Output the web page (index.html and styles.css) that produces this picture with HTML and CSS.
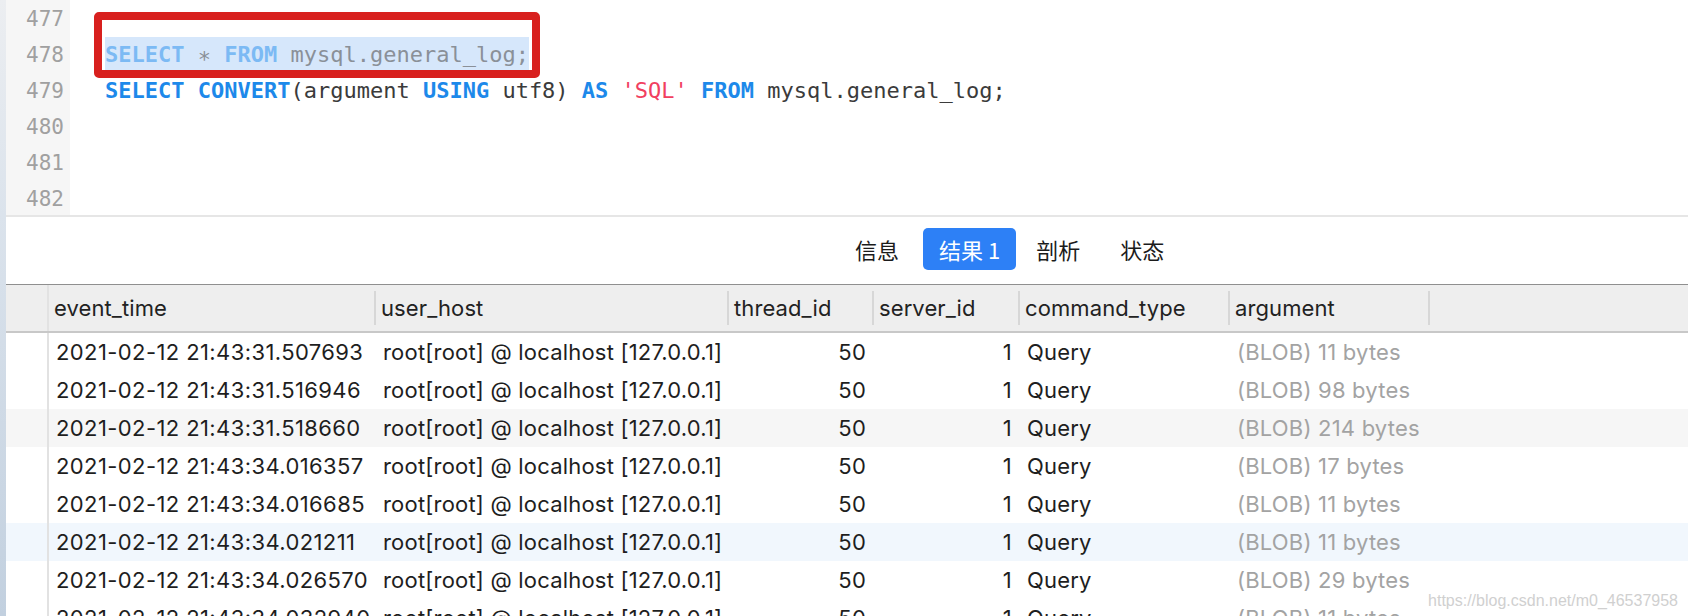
FILE: index.html
```html
<!DOCTYPE html>
<html lang="zh">
<head>
<meta charset="utf-8">
<title>general_log</title>
<link rel="stylesheet" href="styles.css">
</head>
<body>
<div class="app">
  <div class="strip"></div>
  <div class="main">
    <div class="editor">
      <div class="gutter">
        <div>477</div><div>478</div><div>479</div><div>480</div><div>481</div><div>482</div>
      </div>
      <div class="code">
        <div class="line"></div>
        <div class="line"><span class="sel"><span class="kw-s">SELECT</span> <span class="op-s">*</span> <span class="kw-s">FROM</span> mysql.general_log;</span></div>
        <div class="line"><span class="kw">SELECT</span> <span class="kw">CONVERT</span>(argument <span class="kw">USING</span> utf8) <span class="kw">AS</span> <span class="str">'SQL'</span> <span class="kw">FROM</span> mysql.general_log;</div>
        <div class="line"></div>
        <div class="line"></div>
        <div class="line"></div>
      </div>
      <div class="redbox"></div>
    </div>
    <div class="tabs">
      <div class="tab">信息</div>
      <div class="tab active">结果 1</div>
      <div class="tab">剖析</div>
      <div class="tab">状态</div>
    </div>
    <div class="grid">
      <div class="thead">
        <div class="rh"></div>
        <div class="c w1">event_time</div>
        <div class="c w2">user_host</div>
        <div class="c w3">thread_id</div>
        <div class="c w4">server_id</div>
        <div class="c w5">command_type</div>
        <div class="c w6">argument</div>
      </div>
      <div class="row">
        <div class="rh"></div>
        <div class="c w1">2021-02-12 21:43:31.507693</div>
        <div class="c w2">root[root] @ localhost [127.0.0.1]</div>
        <div class="c w3 num">50</div>
        <div class="c w4 num">1</div>
        <div class="c w5">Query</div>
        <div class="c w6 blob">(BLOB) 11 bytes</div>
      </div>
      <div class="row">
        <div class="rh"></div>
        <div class="c w1">2021-02-12 21:43:31.516946</div>
        <div class="c w2">root[root] @ localhost [127.0.0.1]</div>
        <div class="c w3 num">50</div>
        <div class="c w4 num">1</div>
        <div class="c w5">Query</div>
        <div class="c w6 blob">(BLOB) 98 bytes</div>
      </div>
      <div class="row gray">
        <div class="rh"></div>
        <div class="c w1">2021-02-12 21:43:31.518660</div>
        <div class="c w2">root[root] @ localhost [127.0.0.1]</div>
        <div class="c w3 num">50</div>
        <div class="c w4 num">1</div>
        <div class="c w5">Query</div>
        <div class="c w6 blob">(BLOB) 214 bytes</div>
      </div>
      <div class="row">
        <div class="rh"></div>
        <div class="c w1">2021-02-12 21:43:34.016357</div>
        <div class="c w2">root[root] @ localhost [127.0.0.1]</div>
        <div class="c w3 num">50</div>
        <div class="c w4 num">1</div>
        <div class="c w5">Query</div>
        <div class="c w6 blob">(BLOB) 17 bytes</div>
      </div>
      <div class="row">
        <div class="rh"></div>
        <div class="c w1">2021-02-12 21:43:34.016685</div>
        <div class="c w2">root[root] @ localhost [127.0.0.1]</div>
        <div class="c w3 num">50</div>
        <div class="c w4 num">1</div>
        <div class="c w5">Query</div>
        <div class="c w6 blob">(BLOB) 11 bytes</div>
      </div>
      <div class="row blue">
        <div class="rh"></div>
        <div class="c w1">2021-02-12 21:43:34.021211</div>
        <div class="c w2">root[root] @ localhost [127.0.0.1]</div>
        <div class="c w3 num">50</div>
        <div class="c w4 num">1</div>
        <div class="c w5">Query</div>
        <div class="c w6 blob">(BLOB) 11 bytes</div>
      </div>
      <div class="row">
        <div class="rh"></div>
        <div class="c w1">2021-02-12 21:43:34.026570</div>
        <div class="c w2">root[root] @ localhost [127.0.0.1]</div>
        <div class="c w3 num">50</div>
        <div class="c w4 num">1</div>
        <div class="c w5">Query</div>
        <div class="c w6 blob">(BLOB) 29 bytes</div>
      </div>
      <div class="row">
        <div class="rh"></div>
        <div class="c w1">2021-02-12 21:43:34.032940</div>
        <div class="c w2">root[root] @ localhost [127.0.0.1]</div>
        <div class="c w3 num">50</div>
        <div class="c w4 num">1</div>
        <div class="c w5">Query</div>
        <div class="c w6 blob">(BLOB) 11 bytes</div>
      </div>
    </div>
    <div class="watermark">https://blog.csdn.net/m0_46537958</div>
  </div>
</div>
</body>
</html>
```

FILE: styles.css
```css
html, body {
  margin: 0;
  padding: 0;
}
body {
  width: 1688px;
  height: 616px;
  overflow: hidden;
  background: #ffffff;
  font-family: Inter, "Liberation Sans", "Noto Sans CJK SC", sans-serif;
}
.app {
  display: flex;
  height: 616px;
}
.strip {
  flex: none;
  width: 6px;
  background: linear-gradient(#eceef1 0%, #dbe3ec 35%, #c2d0df 100%);
}
.main {
  flex: 1;
  min-width: 0;
  position: relative;
  overflow: hidden;
}

/* editor */
.editor {
  position: relative;
  display: flex;
  height: 215px;
  overflow: hidden;
  border-bottom: 2px solid #e6e6e6;
}
.gutter {
  flex: none;
  width: 58px;
  padding: 1px 6px 0 0;
  background: #f6f6f6;
  text-align: right;
  font-family: "DejaVu Sans Mono", monospace;
  font-size: 21px;
  line-height: 36px;
  color: #a0a0a0;
}
.code {
  flex: 1;
  padding: 1px 0 0 35px;
  font-family: "DejaVu Sans Mono", monospace;
  font-size: 22px;
  line-height: 36px;
  color: #3b3b3b;
}
.line {
  height: 36px;
  white-space: pre;
}
.sel {
  display: inline-block;
  height: 35px;
  background: #d6e7fb;
  color: #8a9098;
}
.kw-s {
  color: #7cbaf4;
  font-weight: bold;
}
.op-s {
  color: #8a9098;
  vertical-align: -5px;
}
.kw {
  color: #1d89ea;
  font-weight: bold;
}
.str {
  color: #f1405f;
}
.redbox {
  position: absolute;
  left: 88px;
  top: 12px;
  width: 446px;
  height: 66px;
  box-sizing: border-box;
  border: 8px solid #d8201e;
  border-radius: 5px;
}

/* tabs */
.tabs {
  display: flex;
  align-items: flex-start;
  gap: 8px;
  height: 68px;
  box-sizing: border-box;
  padding: 11px 0 0 833px;
  border-bottom: 1px solid #8f8f8f;
  font-family: "Noto Sans CJK SC", sans-serif;
  font-size: 22px;
}
.tab {
  height: 42px;
  line-height: 42px;
  padding: 0 16px;
  border-radius: 5px;
  color: #1b1b1b;
}
.tab.active {
  background: #2d80f6;
  color: #ffffff;
}
.tab.active + .tab {
  margin-left: -4px;
}

/* grid */
.grid {
  font-size: 22px;
  letter-spacing: 0.2px;
  color: #1e1e1e;
}
.thead {
  display: flex;
  height: 46px;
  background: #eeeeee;
  border-bottom: 2px solid #c8c8c8;
  color: #222222;
  letter-spacing: 0.1px;
}
.row {
  display: flex;
  height: 38px;
}
.row .w1 {
  letter-spacing: 0.4px;
}
.row.gray {
  background: #f6f6f6;
}
.row.blue {
  background: #f1f7fd;
}
.rh {
  flex: none;
  width: 41px;
  border-right: 2px solid #e2e2e2;
}
.c {
  flex: none;
  box-sizing: border-box;
  display: flex;
  align-items: center;
  padding: 0 8px 0 7px;
  white-space: nowrap;
  overflow: hidden;
}
.thead .c {
  position: relative;
  padding-left: 5px;
}
.thead .c::after {
  content: "";
  position: absolute;
  right: 0;
  top: 6px;
  bottom: 6px;
  width: 2px;
  background: #d7d7d7;
}
.w1 { width: 327px; }
.w2 { width: 353px; }
.w3 { width: 145px; }
.w4 { width: 146px; }
.w5 { width: 210px; }
.w6 { width: 200px; }
.num {
  justify-content: flex-end;
}
.blob {
  color: #a3a3a3;
}
.watermark {
  position: absolute;
  right: 10px;
  bottom: 6px;
  font-family: "Liberation Sans", sans-serif;
  font-size: 16px;
  color: #d0d0d0;
}
```
